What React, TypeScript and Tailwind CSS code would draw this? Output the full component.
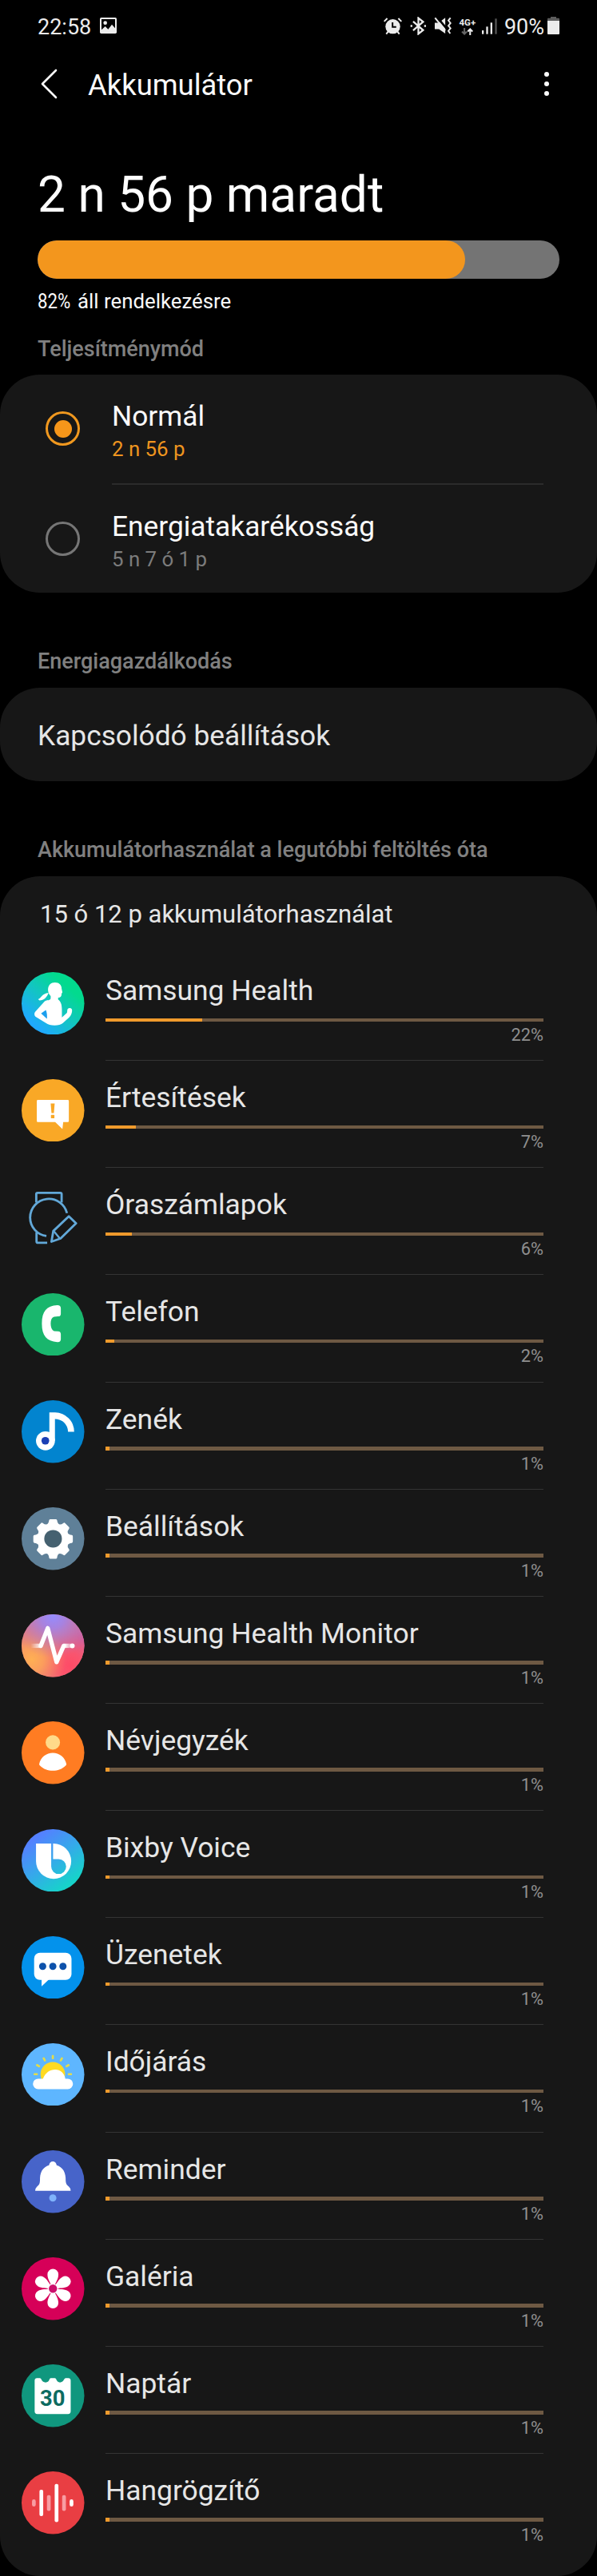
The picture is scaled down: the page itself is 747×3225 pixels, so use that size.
import { FunctionComponent, ReactNode } from 'react'

interface AppUsage {
  name: string
  percent: number
  icon: ReactNode
}

interface IconProps {
  bg?: string
  children: ReactNode
}

const AppIcon: FunctionComponent<IconProps> = ({ bg, children }) => (
  <svg viewBox="0 0 235 235" className="h-full w-full">
    {bg && <circle cx="117.5" cy="117.5" r="117.5" fill={bg} />}
    {children}
  </svg>
)

const HealthIcon = () => (
  <AppIcon bg="url(#health)">
    <defs>
      <linearGradient id="health" x1="0.2" y1="0.85" x2="0.75" y2="0.25">
        <stop offset="0" stopColor="#1fa9ff" />
        <stop offset="0.55" stopColor="#12c6c0" />
        <stop offset="1" stopColor="#02da8e" />
      </linearGradient>
    </defs>
    <path
      fill="#fff"
      d="M125 39C141 39 150 49 150 62L153 76L150 80C150 91 146 96 137 96V103C147 109 151 122 151 140V170L170 153C172 149 170 142 173 138C178 132 189 134 189 142C190 155 183 166 174 174L155 191C143 203 105 203 91 191L52 167C47 162 47 154 51 149L86 110C95 103 108 108 109 98V90C102 84 99 74 99 65C100 49 110 39 125 39Z"
    />
    <path fill="#fff" d="M101 78C94 96 84 106 67 106L62 102C75 97 75 81 101 78Z" />
    <path fill="#1c9fee" d="M91 142L73 155L95 175C96 163 95 151 91 142Z" />
  </AppIcon>
)

const NotificationIcon = () => (
  <AppIcon bg="#f9a826">
    <path
      fill="#fff"
      d="M61 78H173Q177 78 177 82V157Q177 161 173 161H156L153 187L126 161H61Q57 161 57 157V82Q57 78 61 78Z"
    />
    <path fill="#f9a826" d="M109 91H124L121 127H112Z" />
    <rect x="110" y="134" width="13" height="13" rx="2" fill="#f9a826" />
  </AppIcon>
)

const WatchIcon = () => (
  <AppIcon>
    <g fill="none" stroke="#62a8d8" strokeWidth="8.5" strokeLinejoin="round">
      <path d="M55 61V30Q55 25 60 25H145Q150 25 150 30V61" />
      <path d="M170 101A70 70 0 1 0 93 187" />
      <path d="M56 173V207Q56 212 61 212H96" />
      <path d="M119 168L177 113L204 139L146 196L112 208Z" />
      <path d="M120 168L144 197" strokeWidth="7" />
    </g>
  </AppIcon>
)

const PhoneIcon = () => (
  <AppIcon bg="#19b66d">
    <path
      fill="#fff"
      d="M134 45Q147 45 147 57V77Q147 87 137 87L122 88Q109 92 109 114Q109 137 122 142L137 143Q147 144 147 154V172Q147 184 134 183C94 181 76 160 76 114C76 68 94 47 134 45Z"
    />
  </AppIcon>
)

const MusicIcon = () => (
  <AppIcon bg="#0284cf">
    <circle cx="89.500" cy="152" r="35.500" fill="#fff" />
    <path
      fill="#fff"
      d="M104 46H126A71 72 0 0 1 197 118H174A49 49 0 0 0 125 70V152H104Z"
    />
    <circle cx="89" cy="152" r="14.500" fill="#1a3fb5" />
  </AppIcon>
)

const SettingsIcon = () => (
  <AppIcon bg="#5f8098">
    {[0, 45, 90, 135, 180, 225, 270, 315].map((angle) => (
      <path
        key={angle}
        fill="#fff"
        transform={`rotate(${angle} 118 119)`}
        d="M108 45H128Q132 45 133 49Q134 61 142 65V80H94V65Q102 61 103 49Q104 45 108 45Z"
      />
    ))}
    <circle cx="118" cy="119" r="57" fill="#fff" />
    <circle cx="118" cy="118" r="33" fill="#456170" />
  </AppIcon>
)

const MonitorIcon = () => (
  <AppIcon bg="#e07c88">
    <defs>
      <radialGradient id="mon-top" cx="0.5" cy="0.02" r="0.68">
        <stop offset="0" stopColor="#948cff" />
        <stop offset="0.3" stopColor="#a283e8" stopOpacity="0.9" />
        <stop offset="1" stopColor="#c071ae" stopOpacity="0" />
      </radialGradient>
      <radialGradient id="mon-red" cx="0.78" cy="0.82" r="0.55">
        <stop offset="0" stopColor="#ff4a66" />
        <stop offset="0.35" stopColor="#ff4f68" stopOpacity="0.85" />
        <stop offset="1" stopColor="#ff4f68" stopOpacity="0" />
      </radialGradient>
      <radialGradient id="mon-orange" cx="0.16" cy="0.72" r="0.55">
        <stop offset="0" stopColor="#ffb053" />
        <stop offset="0.35" stopColor="#ffa556" stopOpacity="0.85" />
        <stop offset="1" stopColor="#ff8a5c" stopOpacity="0" />
      </radialGradient>
      <radialGradient id="mon-right" cx="1" cy="0.4" r="0.45">
        <stop offset="0" stopColor="#c75fa8" />
        <stop offset="1" stopColor="#c75fa8" stopOpacity="0" />
      </radialGradient>
      <linearGradient id="mon-tail" gradientUnits="userSpaceOnUse" x1="34" y1="0" x2="76" y2="0">
        <stop offset="0" stopColor="#fff" stopOpacity="0" />
        <stop offset="1" stopColor="#fff" />
      </linearGradient>
      <linearGradient id="mon-end" gradientUnits="userSpaceOnUse" x1="160" y1="0" x2="186" y2="0">
        <stop offset="0" stopColor="#fff" />
        <stop offset="1" stopColor="#fff" stopOpacity="0.35" />
      </linearGradient>
    </defs>
    <circle cx="117.5" cy="117.5" r="117.500" fill="url(#mon-right)" />
    <circle cx="117.5" cy="117.5" r="117.500" fill="url(#mon-red)" />
    <circle cx="117.5" cy="117.5" r="117.500" fill="url(#mon-orange)" />
    <circle cx="117.5" cy="117.5" r="117.500" fill="url(#mon-top)" />
    <rect x="34" y="110" width="40" height="16" fill="url(#mon-tail)" />
    <rect x="158" y="110" width="28" height="16" fill="url(#mon-end)" />
    <path
      d="M72 118L98 52L131 179L158 118"
      fill="none"
      stroke="#fff"
      strokeWidth="16"
      strokeLinecap="round"
      strokeLinejoin="round"
    />
    <circle cx="190" cy="118" r="9" fill="#fff" />
  </AppIcon>
)

const ContactsIcon = () => (
  <AppIcon bg="#ff7c22">
    <circle cx="117" cy="79" r="27" fill="#ffda8a" />
    <path
      fill="#fff"
      d="M66 160C71 134 93 118 117 118S163 134 168 160Q168 164 165 166C152 179 135 185 117 185S82 179 69 166Q66 164 66 160Z"
    />
  </AppIcon>
)

const BixbyIcon = () => (
  <AppIcon bg="url(#bixby)">
    <defs>
      <linearGradient id="bixby" gradientUnits="userSpaceOnUse" x1="35" y1="45" x2="165" y2="215">
        <stop offset="0" stopColor="#5480ff" />
        <stop offset="0.5" stopColor="#35a9ea" />
        <stop offset="1" stopColor="#17d3ca" />
      </linearGradient>
    </defs>
    <path fill="#fff" d="M54 54H120A66 66 0 1 1 54 120Z" />
    <path fill="url(#bixby)" d="M111 54H118V112H139A28 28 0 1 1 111 140Z" />
  </AppIcon>
)

const MessagesIcon = () => (
  <AppIcon bg="#0392ec">
    <rect x="47" y="62" width="140" height="102" rx="22" fill="#fff" />
    <path fill="#fff" d="M75 160V188L103 162Z" />
    <circle cx="79" cy="113" r="13.500" fill="#0d52ab" />
    <circle cx="117" cy="113" r="13.500" fill="#0d52ab" />
    <circle cx="155" cy="113" r="13.500" fill="#0d52ab" />
  </AppIcon>
)

const WeatherIcon = () => (
  <AppIcon bg="#5eb6ff">
    {[-90, -60, -30, 0, 30, 60, 90].map((angle) => (
      <rect
        key={angle}
        x="113"
        y="44"
        width="8"
        height="16"
        rx="3"
        fill="#e3dc4a"
        transform={`rotate(${angle} 117 116)`}
      />
    ))}
    <circle cx="117" cy="116" r="46" fill="#ffda22" />
    <path
      fill="#fff"
      d="M62 133H80C90 110 106 99 126 99C145 99 160 112 164 133H173A19.500 19.500 0 0 1 173 172H62A19.500 19.500 0 0 1 62 133Z"
    />
  </AppIcon>
)

const ReminderIcon = () => (
  <AppIcon bg="#4764c9">
    <circle cx="117" cy="56" r="14" fill="#fff" />
    <path
      fill="#fff"
      d="M117 55C149 55 164 78 165 104C165 124 167 128 177 136Q184 142 184 152H51Q51 142 58 136C68 128 69 124 69 104C70 78 85 55 117 55Z"
    />
    <circle cx="117" cy="179" r="13.500" fill="#7fb3fb" />
  </AppIcon>
)

const GalleryIcon = () => (
  <AppIcon bg="#d60058">
    {[0, 60, 120, 180, 240, 300].map((angle) => (
      <path
        key={angle}
        fill="#fff"
        transform={`rotate(${angle} 117.5 117.5)`}
        d="M112 108C108 94 97 82 97 64A20.500 20.500 0 0 1 138 64C138 82 127 94 123 108Z"
      />
    ))}
    <circle cx="117.5" cy="117.5" r="19" fill="#fff" />
    <circle cx="117.5" cy="117.5" r="15.500" fill="#cc0f6c" />
  </AppIcon>
)

const CalendarIcon = () => (
  <AppIcon bg="#10977e">
    <path
      fill="#fff"
      d="M58 52H68C76 52 74 68 90 68S102 52 110 52H124C132 52 130 68 144 68S158 52 166 52H175Q184 52 184 61V176Q184 186 174 186H59Q49 186 49 176V61Q49 52 58 52Z"
    />
    <text
      x="116"
      y="155"
      textAnchor="middle"
      fontFamily="Roboto, sans-serif"
      fontWeight="700"
      fontSize="82"
      fill="#0d6b61"
    >
      30
    </text>
  </AppIcon>
)

const RecorderIcon = () => (
  <AppIcon bg="#e93e43">
    <rect x="39" y="105" width="14" height="27" rx="7" fill="#f89da3" />
    <rect x="67" y="69" width="14" height="99" rx="6" fill="#fff" />
    <rect x="95" y="89" width="14" height="59" rx="6" fill="#f89da3" />
    <rect x="124" y="47" width="14" height="143" rx="6" fill="#fff" />
    <rect x="152" y="89" width="14" height="59" rx="6" fill="#f89da3" />
    <rect x="180" y="105" width="14" height="27" rx="7" fill="#fff" />
  </AppIcon>
)

const apps: AppUsage[] = [
  { name: 'Samsung Health', percent: 22, icon: <HealthIcon /> },
  { name: 'Értesítések', percent: 7, icon: <NotificationIcon /> },
  { name: 'Óraszámlapok', percent: 6, icon: <WatchIcon /> },
  { name: 'Telefon', percent: 2, icon: <PhoneIcon /> },
  { name: 'Zenék', percent: 1, icon: <MusicIcon /> },
  { name: 'Beállítások', percent: 1, icon: <SettingsIcon /> },
  { name: 'Samsung Health Monitor', percent: 1, icon: <MonitorIcon /> },
  { name: 'Névjegyzék', percent: 1, icon: <ContactsIcon /> },
  { name: 'Bixby Voice', percent: 1, icon: <BixbyIcon /> },
  { name: 'Üzenetek', percent: 1, icon: <MessagesIcon /> },
  { name: 'Időjárás', percent: 1, icon: <WeatherIcon /> },
  { name: 'Reminder', percent: 1, icon: <ReminderIcon /> },
  { name: 'Galéria', percent: 1, icon: <GalleryIcon /> },
  { name: 'Naptár', percent: 1, icon: <CalendarIcon /> },
  { name: 'Hangrögzítő', percent: 1, icon: <RecorderIcon /> },
]

const StatusBar = () => (
  <div className="flex h-[67px] items-center pr-[47px] pl-[47px] text-[27px] leading-8 text-[#ececec]">
    <span>22:58</span>
    <svg viewBox="0 0 63 60" className="mb-[3px] ml-[11px] h-5 w-[21px]">
      <rect width="63" height="60" rx="5" fill="#ececec" />
      <path d="M6 6H57V40L45 26L31 44L20 33L6 46Z" fill="#000" />
      <circle cx="20" cy="20" r="7" fill="#ececec" />
    </svg>

    <div className="ml-auto flex items-center">
      <svg viewBox="0 0 70 68" className="mb-[3px] h-[23px] w-[23px]" fill="none" stroke="#ececec" strokeWidth="6">
        <circle cx="35" cy="36" r="28" fill="#ececec" stroke="none" />
        <path d="M2 17L14 5M68 17L56 5M10 65L17 56M60 65L53 56" />
        <path d="M34 20V38H48" stroke="#000" />
      </svg>
      <svg
        viewBox="0 0 62 70"
        className="mb-[3px] ml-[10px] h-[23px] w-[21px]"
        fill="none"
        stroke="#ececec"
        strokeWidth="7"
      >
        <path d="M11 18L49 51L31 65V5L49 19L11 52" />
        <path d="M1 35H8M53 35H60" />
      </svg>
      <svg viewBox="0 0 68 70" className="mb-[3px] ml-[9px] h-[23px] w-[23px]" fill="none">
        <path d="M2 23H17L42 4V64L18 47H2Z" fill="#ececec" />
        <path d="M8 -2L46 44" stroke="#000" strokeWidth="8" />
        <path d="M3 4L42 52" stroke="#ececec" strokeWidth="6" />
        <path d="M62 4L54 14L62 24L54 34L62 44L54 54L61 64" stroke="#ececec" strokeWidth="6" />
      </svg>
      <div className="ml-[8px] flex w-[22px] flex-col items-center">
        <span className="text-[11.5px] leading-[11px] font-bold">4G+</span>
        <svg viewBox="0 0 44 26" className="mt-px h-[9px] w-[15px]" fill="none" strokeWidth="6">
          <path d="M12 0V22M3 13L12 22L21 13" stroke="#666" />
          <path d="M33 26V4M24 13L33 4L42 13" stroke="#ececec" />
        </svg>
      </div>
      <svg viewBox="0 0 57 60" className="mb-[2px] ml-[7px] h-5 w-[19px]">
        <rect x="0" y="45" width="7" height="14" fill="#ececec" />
        <rect x="16" y="31" width="7" height="28" fill="#ececec" />
        <rect x="32" y="16" width="7" height="43" fill="#ececec" />
        <rect x="49" y="1" width="7" height="58" fill="#555" />
      </svg>
      <span className="ml-[9px]">90%</span>
      <svg viewBox="0 0 45 66" className="mb-[3px] ml-[4px] h-[22px] w-[15px]">
        <path d="M12 0H33V5H42Q45 5 45 8V18H0V8Q0 5 3 5H12Z" fill="#5c5c5c" />
        <path d="M0 15H45V63Q45 66 42 66H3Q0 66 0 63Z" fill="#ececec" />
      </svg>
    </div>
  </div>
)

const Header = () => (
  <div className="flex h-20 items-center pr-[60px] pl-[50px]">
    <svg viewBox="0 0 24 38" className="mb-1 h-[38px] w-6">
      <path
        d="M20 2L3 19L20 36"
        fill="none"
        stroke="#fafafa"
        strokeWidth="2.600"
        strokeLinecap="round"
        strokeLinejoin="round"
      />
    </svg>
    <h1 className="ml-9 text-[36.4px] leading-[44px] text-[#fafafa]">Akkumulátor</h1>
    <div className="mb-1 ml-auto flex flex-col gap-1.5">
      <span className="h-1.5 w-1.5 rounded-full bg-[#fafafa]" />
      <span className="h-1.5 w-1.5 rounded-full bg-[#fafafa]" />
      <span className="h-1.5 w-1.5 rounded-full bg-[#fafafa]" />
    </div>
  </div>
)

interface SectionTitleProps {
  className: string
  children: ReactNode
}
const SectionTitle: FunctionComponent<SectionTitleProps> = ({ className, children }) => (
  <h2 className={`px-[47px] text-[27px] leading-10 font-medium text-[#808080] ${className}`}>
    {children}
  </h2>
)

interface PowerModeProps {
  label: string
  time: string
  active?: boolean
}
const PowerMode: FunctionComponent<PowerModeProps> = ({ label, time, active }) => (
  <div className="flex h-[136px] pt-[31px] pl-[57px]">
    <div
      className={`mt-[15px] flex h-[43px] w-[43px] items-center justify-center rounded-full border-[3px] ${
        active ? 'border-[#f0981f]' : 'border-[#767676]'
      }`}
    >
      {active && <div className="h-[22px] w-[22px] rounded-full bg-[#f6961a]" />}
    </div>
    <div className="ml-10">
      <p className="text-[35.3px] leading-[42px] text-[#fafafa]">{label}</p>
      <p className={`text-[25.8px] leading-10 ${active ? 'text-[#ee951f]' : 'text-[#7c7c7c]'}`}>
        {time}
      </p>
    </div>
  </div>
)

interface UsageRowProps {
  app: AppUsage
  last: boolean
}
const UsageRow: FunctionComponent<UsageRowProps> = ({ app, last }) => (
  <div className="flex h-[134.15px] pr-[67px] pl-[27px]">
    <div className="mt-[22.5px] h-[78.500px] w-[78.500px] shrink-0">{app.icon}</div>
    <div
      className={`ml-[26.5px] flex-1 border-b pt-[22px] ${
        last ? 'border-transparent' : 'border-[#343434]'
      }`}
    >
      <p className="text-[35.4px] leading-[48px] text-[#e6e6e6]">{app.name}</p>
      <div className="mt-[10.5px] h-[4.5px] bg-[#6e5943]">
        <div className="h-full bg-[#ef9a2c]" style={{ width: `${app.percent}%` }} />
      </div>
      <p className="mt-1 text-right text-[21.800px] leading-[26px] text-[#8f8f8f]">
        {app.percent}%
      </p>
    </div>
  </div>
)

const App = () => (
  <div className="min-h-[3225px] w-[747px] bg-black font-[Roboto,sans-serif]">
    <StatusBar />
    <Header />

    <div className="mt-[60px] px-[47px]">
      <p className="text-[62.2px] leading-[74px] text-white">2 n 56 p maradt</p>
      <div className="mt-5 h-12 overflow-hidden rounded-full bg-[#747474]">
        <div className="h-full w-[82%] rounded-full bg-[#f3961d]" />
      </div>
      <p className="mt-[10px] flex text-[25.8px] leading-9 text-[#fafafa]">
        <span className="w-[50px] origin-left scale-x-[0.86]">82%</span>
        <span>áll rendelkezésre</span>
      </p>
    </div>

    <SectionTitle className="mt-[22px]">Teljesítménymód</SectionTitle>
    <div className="mt-3 h-[273px] rounded-[50px] bg-[#171717]">
      <PowerMode label="Normál" time="2 n 56 p" active />
      <div className="mr-[67px] ml-[140px] h-0.5 bg-[#2b2b2b]" />
      <PowerMode label="Energiatakarékosság" time="5 n 7 ó 1 p" />
    </div>

    <SectionTitle className="mt-[66px]">Energiagazdálkodás</SectionTitle>
    <div className="mt-[13px] flex h-[117px] items-center rounded-[50px] bg-[#171717] px-[47px] pt-0.5">
      <p className="text-[35.3px] leading-[42px] text-[#e6e6e6]">Kapcsolódó beállítások</p>
    </div>

    <SectionTitle className="mt-[66px]">Akkumulátorhasználat a legutóbbi feltöltés óta</SectionTitle>
    <div className="mt-[13px] h-[2128px] rounded-[50px] bg-[#171717] pt-7">
      <p className="mb-[29px] pl-[50px] text-[31px] leading-10 text-[#e6e6e6]">
        15 ó 12 p akkumulátorhasználat
      </p>
      {apps.map((app, index) => (
        <UsageRow key={app.name} app={app} last={index === apps.length - 1} />
      ))}
    </div>
  </div>
)

export default App
